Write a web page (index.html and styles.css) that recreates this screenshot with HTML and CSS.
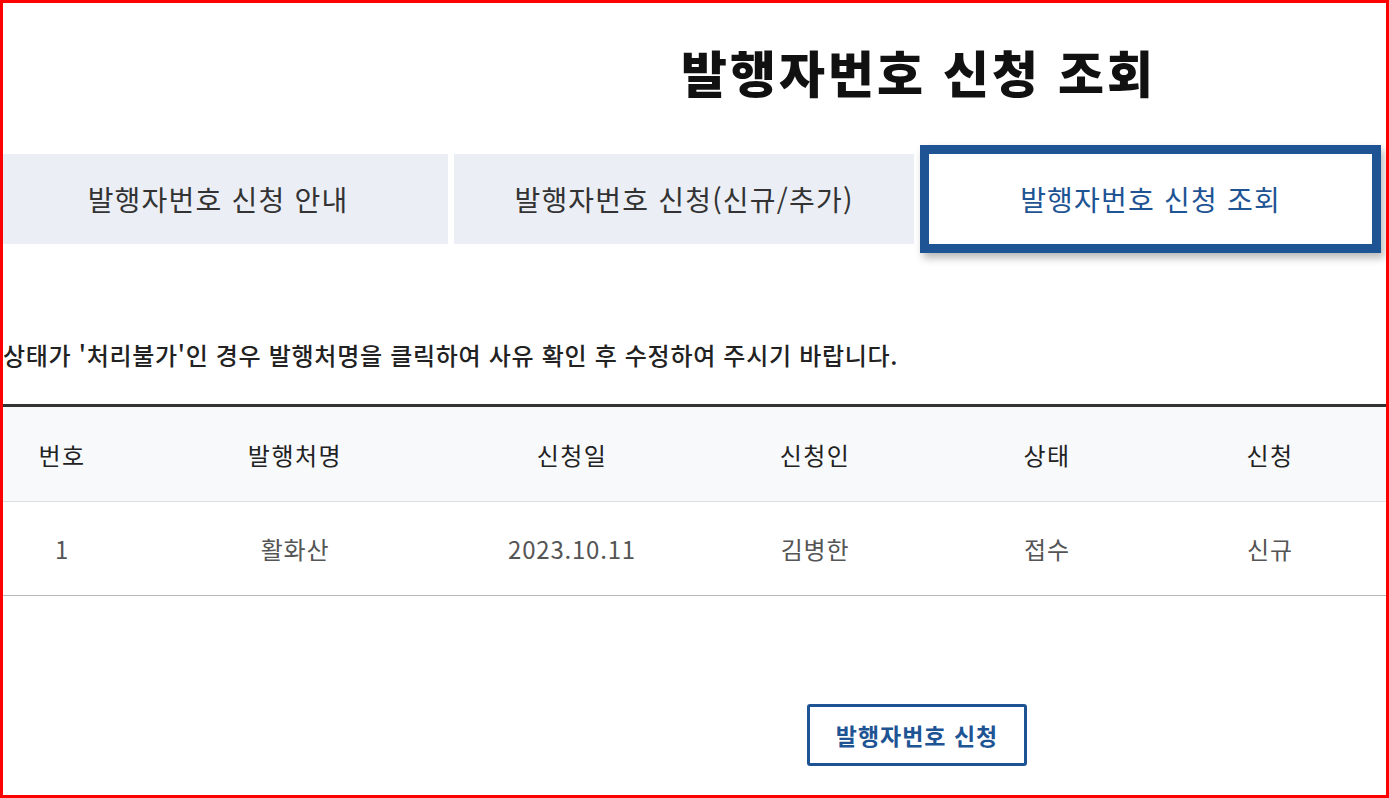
FILE: index.html
```html
<!DOCTYPE html>
<html lang="ko">
<head>
<meta charset="utf-8">
<title>발행자번호 신청 조회</title>
<link rel="stylesheet" href="styles.css">
</head>
<body>
<div class="viewport">
  <div class="page">
    <h1 class="title">발행자번호 신청 조회</h1>
    <div class="tabs">
      <div class="tab">발행자번호 신청 안내</div>
      <div class="tab">발행자번호 신청(신규/추가)</div>
      <div class="tab active">발행자번호 신청 조회</div>
    </div>
    <p class="notice">상태가 '처리불가'인 경우 발행처명을 클릭하여 사유 확인 후 수정하여 주시기 바랍니다.</p>
    <table class="list">
      <colgroup>
        <col class="c1"><col class="c2"><col class="c3"><col class="c4"><col class="c5"><col class="c6">
      </colgroup>
      <thead>
        <tr><th>번호</th><th>발행처명</th><th>신청일</th><th>신청인</th><th>상태</th><th>신청</th></tr>
      </thead>
      <tbody>
        <tr><td>1</td><td>활화산</td><td>2023.10.11</td><td>김병한</td><td>접수</td><td>신규</td></tr>
      </tbody>
    </table>
    <div class="actions">
      <button class="btn" type="button">발행자번호 신청</button>
    </div>
  </div>
</div>
<div class="frame"></div>
</body>
</html>
```

FILE: styles.css
```css
html, body {
  margin: 0;
  padding: 0;
  background: #fff;
}
body {
  font-family: "Noto Sans CJK KR", "Noto Sans", sans-serif;
  color: #222;
  overflow: hidden;
}
.viewport {
  width: 1389px;
  height: 798px;
  overflow: hidden;
}
.page {
  width: 1834px;
  padding-top: 41px;
}
.title {
  margin: 0;
  text-align: center;
  font-size: 50px;
  line-height: 60px;
  font-weight: 900;
  color: #111;
  letter-spacing: 3px;
  text-indent: 3px;
}
.tabs {
  display: flex;
  align-items: center;
  gap: 6px;
  margin: 44px 0 0 -12px;
  height: 108px;
}
.tab {
  width: 460px;
  height: 90px;
  box-sizing: border-box;
  background: #ebeef5;
  display: flex;
  align-items: center;
  justify-content: center;
  font-size: 28px;
  color: #333;
  letter-spacing: 1.2px;
}
.tab.active {
  width: 461px;
  height: 108px;
  background: #fff;
  border: 9px solid #1e5494;
  color: #1e5494;
  box-shadow: 3px 5px 8px rgba(0, 0, 0, 0.28);
}
.notice {
  margin: 87px 0 0 3px;
  font-size: 24px;
  line-height: 30px;
  font-weight: 500;
  color: #222;
  letter-spacing: 0.7px;
}
.list {
  margin-top: 34px;
  width: 1398px;
  border-collapse: collapse;
  table-layout: fixed;
  border-top: 3px solid #333;
}
.c1 { width: 124px; }
.c2 { width: 342px; }
.c3 { width: 212px; }
.c4 { width: 274px; }
.c5 { width: 190px; }
.c6 { width: 256px; }
.list th {
  height: 94px;
  padding: 0;
  background: #f8f9fb;
  border-bottom: 1px solid #dcdcdc;
  font-size: 24px;
  font-weight: 400;
  color: #222;
  text-align: center;
  letter-spacing: 1.5px;
}
.list td {
  height: 93px;
  padding: 0;
  border-bottom: 1px solid #b8b8b8;
  font-size: 24px;
  color: #555;
  text-align: center;
  letter-spacing: 0.8px;
}
.actions {
  margin-top: 108px;
  display: flex;
  justify-content: center;
}
.btn {
  width: 220px;
  height: 62px;
  box-sizing: border-box;
  background: #fff;
  border: 3px solid #1e5494;
  border-radius: 3px;
  font-family: "Noto Sans CJK KR", "Noto Sans", sans-serif;
  font-size: 23px;
  font-weight: 700;
  color: #1e5494;
  padding: 0;
  letter-spacing: 1px;
}
.frame {
  position: fixed;
  left: 0;
  top: 0;
  width: 1389px;
  height: 798px;
  box-sizing: border-box;
  border: 3px solid #f00;
  pointer-events: none;
}
```
